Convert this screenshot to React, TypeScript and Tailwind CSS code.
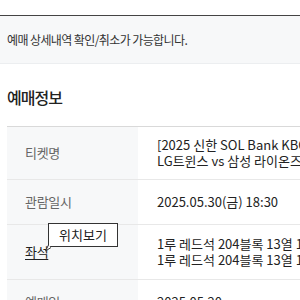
import React from "react";

const rows = [
  { label: "티켓명", lines: ["[2025 신한 SOL Bank KBO 리그]", "LG트윈스 vs 삼성 라이온즈"], h: "h-[53px]" },
  { label: "관람일시", lines: ["2025.05.30(금) 18:30"], h: "h-[45px]" },
  { label: "좌석", lines: ["1루 레드석 204블록 13열 11번", "1루 레드석 204블록 13열 12번"], h: "h-[55px]", seat: true },
  { label: "예매일", lines: ["2025.05.20"], h: "h-[45px]" },
];

const App: React.FC = () => {
  return (
    <div
      className="w-[300px] h-[300px] overflow-hidden bg-white text-[#222]"
      style={{ fontFamily: '"Noto Sans CJK KR", "Noto Sans", sans-serif' }}
    >
      <div className="h-[15px]" />
      <div className="border-t border-[#444] bg-[#f7f8f9] border-b border-b-[#eceef0] h-[49px] flex items-center px-[7px]">
        <p className="text-[12px] tracking-[-0.6px] text-[#333] whitespace-nowrap">예매 상세내역 확인/취소가 가능합니다.</p>
      </div>
      <h2 className="mt-[22px] px-[7px] text-[16px] font-medium tracking-[-1px] text-[#222] leading-[22px]">예매정보</h2>
      <div className="ml-[7px] mt-[18px] border-t border-[#d9d9d9] w-[400px]">
        {rows.map((r) => (
          <div key={r.label} className={`flex border-b border-[#e8e8e8] ${r.h}`}>
            <div className="w-[131px] shrink-0 bg-[#f7f8f9] flex items-center pl-[18px] relative">
              {r.seat ? (
                <>
                  <span className="text-[13px] tracking-[-0.3px] text-[#222] underline underline-offset-2">{r.label}</span>
                  <div className="absolute left-[41px] top-[-2px] w-[70px] h-[24px] bg-white border border-[#333] flex items-center justify-center">
                    <span className="text-[13px] text-[#222]">위치보기</span>
                  </div>
                  <svg className="absolute left-[38px] top-[20px]" width="6" height="7" viewBox="0 0 6 7">
                    <path d="M3.5 0 L0.5 6 L6 2.5" fill="#fff" stroke="#333" strokeWidth="1" />
                  </svg>
                </>
              ) : (
                <span className="text-[13px] tracking-[-0.3px] text-[#666]">{r.label}</span>
              )}
            </div>
            <div className="flex flex-col justify-center pl-[19px] whitespace-nowrap">
              {r.lines.map((l) => (
                <div key={l} className="text-[13px] leading-[16px] text-[#222]">{l}</div>
              ))}
            </div>
          </div>
        ))}
      </div>
    </div>
  );
};

export default App;
